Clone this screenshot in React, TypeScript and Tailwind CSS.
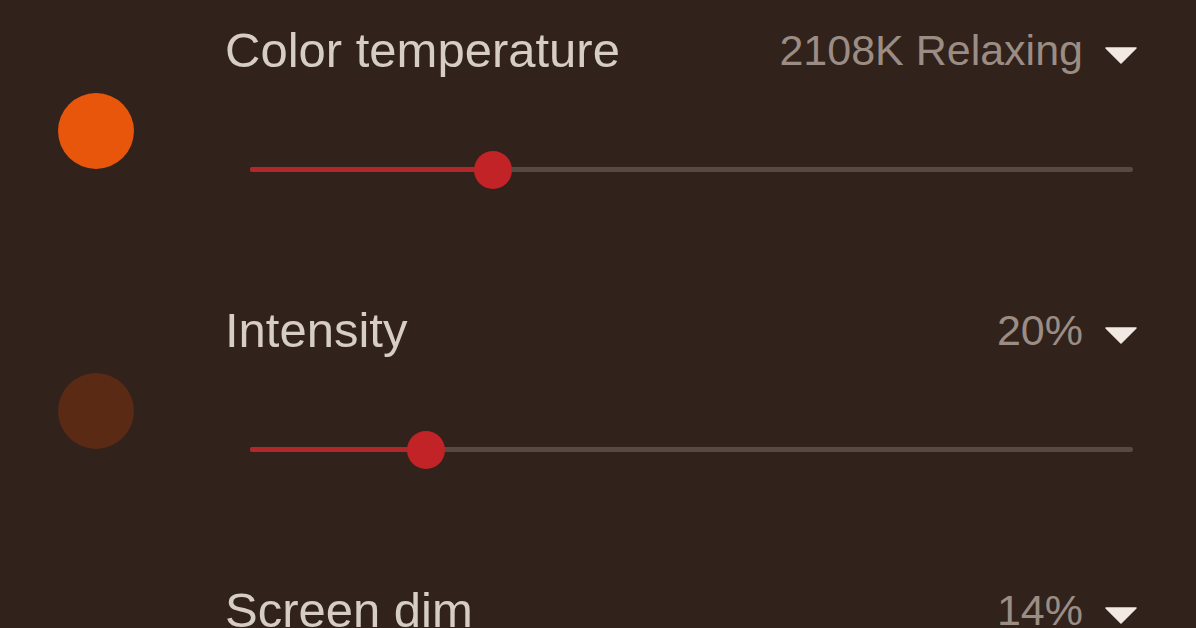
import React from "react";

type Setting = {
  label: string;
  value: string;
  swatch: string;
  level: number;
};

const settings: Setting[] = [
  { label: "Color temperature", value: "2108K Relaxing", swatch: "#e8560c", level: 27.5 },
  { label: "Intensity", value: "20%", swatch: "#5a2a15", level: 19.9 },
  { label: "Screen dim", value: "14%", swatch: "#3a2119", level: 14 },
];

function Caret() {
  return (
    <svg width="32" height="17" viewBox="0 0 32 17" className="mt-[10px] shrink-0">
      <path d="M1 1 H31 L16 16 Z" fill="#f1e9e2" stroke="#f1e9e2" strokeWidth="1.5" strokeLinejoin="round" />
    </svg>
  );
}

function Slider({ level }: { level: number }) {
  return (
    <div className="relative ml-[25px] mr-[4px] h-[5px] rounded-full bg-[#5a4941]">
      <div className="h-full rounded-full bg-[#b3272a]" style={{ width: `${level}%` }} />
      <span
        className="absolute top-1/2 h-[38px] w-[38px] -translate-x-1/2 -translate-y-1/2 rounded-full bg-[#c12327]"
        style={{ left: `${level}%` }}
      />
    </div>
  );
}

function SettingRow({ setting }: { setting: Setting }) {
  return (
    <div className="flex h-[280px] shrink-0">
      <div className="w-[225px] shrink-0 pl-[58px] pt-[71px]">
        <div className="h-[76px] w-[76px] rounded-full" style={{ backgroundColor: setting.swatch }} />
      </div>
      <div className="mr-[59px] flex-1">
        <div className="flex h-[56px] items-center justify-between">
          <span className="text-[49px] leading-[56px] text-[#d6cdc5]">{setting.label}</span>
          <div className="flex items-center gap-[22px]">
            <span className="text-[43px] leading-[56px] text-[#9b8d84]">{setting.value}</span>
            <Caret />
          </div>
        </div>
        <div className="mt-[89px]">
          <Slider level={setting.level} />
        </div>
      </div>
    </div>
  );
}

export default function App() {
  return (
    <div
      className="h-[628px] w-[1196px] overflow-hidden bg-[#32221c] pt-[22px]"
      style={{ fontFamily: '"Liberation Sans", Arial, sans-serif' }}
    >
      <div className="flex flex-col">
        {settings.map((s) => (
          <SettingRow key={s.label} setting={s} />
        ))}
      </div>
    </div>
  );
}
